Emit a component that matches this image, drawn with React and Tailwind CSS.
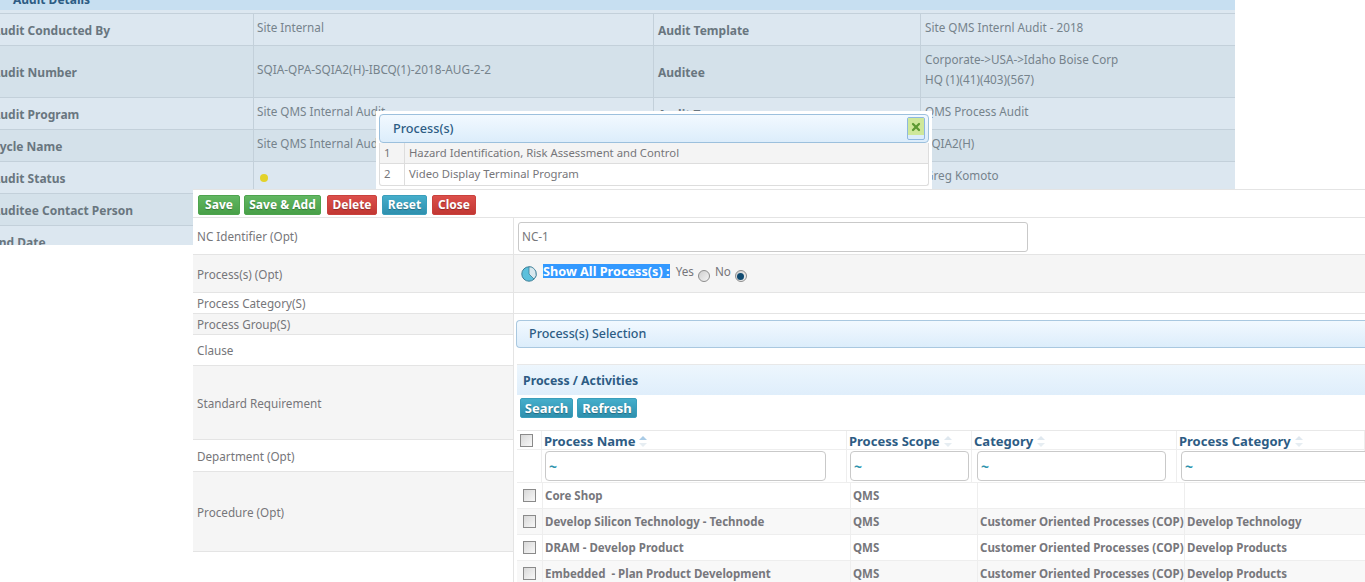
import React from 'react';
import { X } from 'lucide-react';

const font = "font-['Tahoma','Noto_Sans','DejaVu_Sans',sans-serif]";

const auditRows = [
  { h: 'h-8', bg: 'bg-[#dce7f0]', a: 'Audit Conducted By', b: 'Site Internal', c: 'Audit Template', d: 'Site QMS Internl Audit - 2018' },
  { h: 'h-[52px]', bg: 'bg-[#d4e1ea]', a: 'Audit Number', b: 'SQIA-QPA-SQIA2(H)-IBCQ(1)-2018-AUG-2-2', tall: true, c: 'Auditee', d: 'Corporate->USA->Idaho Boise Corp', d2: 'HQ (1)(41)(403)(567)' },
  { h: 'h-8', bg: 'bg-[#dce7f0]', a: 'Audit Program', b: 'Site QMS Internal Audit', c: 'Audit Type', d: 'QMS Process Audit' },
  { h: 'h-8', bg: 'bg-[#d4e1ea]', a: 'Cycle Name', b: 'Site QMS Internal Audit', c: 'Cycle', d: 'SQIA2(H)' },
  { h: 'h-8', bg: 'bg-[#dce7f0]', a: 'Audit Status', dot: true, c: 'Lead Auditor', d: 'Greg Komoto' },
  { h: 'h-8', bg: 'bg-[#d4e1ea]', a: 'Auditee Contact Person', b: '', c: '', d: '' },
  { h: 'h-8', bg: 'bg-[#dce7f0]', a: 'End Date', b: '', c: '', d: '' },
];

const formRows = [
  { h: 'h-[37px]', label: 'NC Identifier (Opt)' },
  { h: 'h-[38px]', label: 'Process(s) (Opt)', gray: true },
  { h: 'h-[21px]', label: 'Process Category(S)' },
  { h: 'h-[21px]', label: 'Process Group(S)', gray: true },
  { h: 'h-[31px]', label: 'Clause' },
  { h: 'h-[74px]', label: 'Standard Requirement', gray: true },
  { h: 'h-[32px]', label: 'Department (Opt)' },
  { h: 'h-[80px]', label: 'Procedure (Opt)', gray: true },
];

const processes = [
  { name: 'Core Shop', scope: 'QMS', category: '', group: '' },
  { name: 'Develop Silicon Technology - Technode', scope: 'QMS', category: 'Customer Oriented Processes (COP)', group: 'Develop Technology' },
  { name: 'DRAM - Develop Product', scope: 'QMS', category: 'Customer Oriented Processes (COP)', group: 'Develop Products' },
  { name: 'Embedded  - Plan Product Development', scope: 'QMS', category: 'Customer Oriented Processes (COP)', group: 'Develop Products' },
];

const headCols = [
  { w: 'w-[305px] shrink-0', label: 'Process Name', active: true, pad: 'pl-[3px]', filter: 'w-[281px]' },
  { w: 'w-[125px] shrink-0', label: 'Process Scope', pad: 'pl-[3px]', filter: 'w-[119px]' },
  { w: 'w-[205px] shrink-0', label: 'Category', pad: 'pl-[5px]', filter: 'w-[189px]' },
  { w: 'flex-1 min-w-0', label: 'Process Category', pad: 'pl-[4px]', filter: 'w-[200px]' },
];

const Btn = ({ color, w, size = 'text-[12px]', children }) => (
  <button className={`${w} h-[20px] shrink-0 rounded-[2px] border ${size} leading-none font-bold text-white [text-shadow:0_1px_1px_rgba(0,0,0,0.3)] bg-gradient-to-b ${color}`}>
    {children}
  </button>
);

const green = 'from-[#62b762] to-[#48a048] border-[#4ea44e]';
const red = 'from-[#dc4f4b] to-[#c23733] border-[#c9413d]';
const blue = 'from-[#45aecb] to-[#2f90ae] border-[#3a9ebb]';

const Check = () => (
  <span className="block w-[13px] h-[13px] border border-[#8a8a8a] bg-gradient-to-br from-[#d8d8d8] to-[#f8f8f8]" />
);

const Radio = ({ on }) => (
  <span className="inline-flex items-center justify-center w-3 h-3 rounded-full border border-[#8d8d8d] bg-gradient-to-br from-[#cfcfcf] to-[#f4f4f4] mt-[7px]">
    {on && <span className="w-[7px] h-[7px] rounded-full bg-[#0f4a70]" />}
  </span>
);

const SortIcon = ({ active }) => (
  <svg width="8" height="11" viewBox="0 0 8 11" className="ml-1">
    <path d="M4 0 L8 4 H0 Z" fill={active ? '#a9cbe6' : '#dfe8ef'} />
    <path d="M4 11 L8 7 H0 Z" fill="#e6edf2" />
  </svg>
);

const PieIcon = () => (
  <svg width="16" height="16" viewBox="0 0 16 16" className="mt-[4px]">
    <circle cx="8" cy="8" r="7.2" fill="#5cc0dc" stroke="#3d7f98" />
    <path d="M8 8 V0.8 A7.2 7.2 0 0 1 13.1 13.1 Z" fill="#d8e8ee" stroke="#3d7f98" strokeWidth="0.8" />
  </svg>
);

const AuditPanel = () => (
  <div className="w-[1235px] h-[245px] overflow-hidden text-[11.7px]">
    <div className="h-[10px] bg-[#c7dff1] overflow-hidden pl-[13px]">
      <div className="-mt-[9px] text-[12px] font-bold text-[#2d5c84]">Audit Details</div>
    </div>
    <div className="h-[3px] bg-[#dce7f0]" />
    {auditRows.map((r) => (
      <div key={r.a} className={`flex ${r.h} ${r.bg} border-t border-[#c3d0da] text-[#76838c]`}>
        <div className="w-[262px] shrink-0 -ml-[8px] flex items-center text-[12px] font-bold text-[#69767f] border-r border-[#c3d0da]">
          <span className="pt-[2px]">{r.a}</span>
        </div>
        <div className={`w-[400px] shrink-0 pl-[3px] border-r border-[#c3d0da] ${r.tall ? 'pt-[15px] text-[11.8px]' : 'pt-[5px]'}`}>
          {r.dot ? <span className="block w-2 h-2 rounded-full bg-[#e3d22a] ml-[3px] mt-[7px]" /> : r.b}
        </div>
        <div className="w-[267px] shrink-0 pl-[4px] flex items-center text-[12px] font-bold text-[#69767f] border-r border-[#c3d0da]">
          <span className="pt-[2px]">{r.c}</span>
        </div>
        <div className="flex-1 pl-[4px] pt-[5px] leading-[20px]">
          <div className="-mt-[2px]">{r.d}</div>
          {r.d2 && <div>{r.d2}</div>}
        </div>
      </div>
    ))}
  </div>
);

const ProcessPopup = () => (
  <div className="absolute left-[376px] top-[111px] w-[556px] h-[78px] bg-white p-[3px] pb-0 text-[11.3px]">
    <div className="relative h-[29px] flex items-center pl-[13px] rounded-[4px] border border-[#9cc0dd] bg-gradient-to-b from-[#f2f9ff] to-[#dcedfb] text-[12.7px] font-medium text-[#2d5c84]">
      Process(s)
      <span className="absolute right-[3px] top-[2px] w-[18px] h-[23px] rounded-[2px] border border-[#8fb8e0] flex items-start justify-center bg-[#dcedfb]">
        <span className="w-full h-[17px] flex items-center justify-center bg-[#cfe89a]">
          <X size={12} strokeWidth={4.5} className="text-[#5d9a33]" />
        </span>
      </span>
    </div>
    <div className="border border-t-0 border-[#dddddd] rounded-b-[3px] text-[#76767a]">
      <div className="flex h-[21px] items-center bg-[#f4f4f4] border-b border-[#dddddd]">
        <span className="w-[25px] pl-[4px] h-full flex items-center border-r border-[#dddddd]">1</span>
        <span className="pl-1">Hazard Identification, Risk Assessment and Control</span>
      </div>
      <div className="flex h-[21px] items-center">
        <span className="w-[25px] pl-[4px] h-full flex items-center border-r border-[#dddddd]">2</span>
        <span className="pl-1">Video Display Terminal Program</span>
      </div>
    </div>
  </div>
);

const ProcessTable = () => (
  <div className="ml-[3px] mt-[16px] border-t border-[#e8e8e8]">
    <div className="h-[30px] flex items-center pl-[6px] pt-[2px] bg-gradient-to-b from-[#edf6fd] to-[#dfeefb] text-[12.3px] font-bold text-[#2d5c84]">
      Process / Activities
    </div>
    <div className="h-[35px] flex items-start gap-[4px] pl-[3px] pt-[3px]">
      <Btn color={blue} w="w-[53px]" size="text-[13px]">Search</Btn>
      <Btn color={blue} w="w-[60px]" size="text-[13px]">Refresh</Btn>
    </div>
    <div className="flex h-[19px] border-t border-[#e8e8e8] text-[13px] font-bold text-[#2d5c84]">
      <div className="w-[25px] shrink-0 flex items-center pl-[3px] pt-[1px] border-r border-[#eeeeee]"><Check /></div>
      {headCols.map((c) => (
        <div key={c.label} className={`${c.w} pl-[2px] pt-[3px] flex items-center border-r border-[#eeeeee]`}>
          {c.label}
          <SortIcon active={c.active} />
        </div>
      ))}
    </div>
    <div className="flex h-[34px] border-t border-b border-[#eeeeee]">
      <div className="w-[25px] shrink-0 border-r border-[#eeeeee]" />
      {headCols.map((c) => (
        <div key={c.label} className={`${c.w} ${c.pad} pt-[1px] border-r border-[#eeeeee]`}>
          <div className={`${c.filter} h-[30px] flex items-center pl-[3px] rounded-[4px] border border-[#c9c9c9] bg-white text-[14px] text-[#2f93ad] font-bold`}>~</div>
        </div>
      ))}
    </div>
    {processes.map((p, i) => (
      <div key={p.name} className={`flex h-[26px] items-center border-b border-[#eeeeee] font-bold text-[11.5px] text-[#77777c] whitespace-pre ${i % 2 ? 'bg-[#f8f8f8]' : 'bg-white'}`}>
        <div className="w-[26px] h-full shrink-0 flex items-center pl-[6px] border-r border-[#eeeeee]"><Check /></div>
        <div className="w-[308px] h-full flex items-center pl-[2px] border-r border-[#eeeeee]">{p.name}</div>
        <div className="w-[127px] h-full flex items-center pl-[2px] border-r border-[#eeeeee]">{p.scope}</div>
        <div className="w-[207px] h-full flex items-center pl-[2px] border-r border-[#eeeeee]">{p.category}</div>
        <div className="flex-1 h-full flex items-center pl-[2px]">{p.group}</div>
      </div>
    ))}
  </div>
);

const FormPanel = () => (
  <div className="absolute left-[193px] top-[189px] right-0 bottom-0 overflow-hidden bg-white border-t border-[#e4e4e4] text-[11.7px] text-[#76767a]">
    <div className="h-[28px] flex items-start pl-[5px] pt-[5px] border-b border-[#e4e4e4]">
      <Btn color={green} w="w-[42px]">Save</Btn>
      <Btn color={green} w="w-[77px] ml-[4px]">Save &amp; Add</Btn>
      <Btn color={red} w="w-[50px] ml-[6px]">Delete</Btn>
      <Btn color={blue} w="w-[45px] ml-[5px]">Reset</Btn>
      <Btn color={red} w="w-[44px] ml-[5px]">Close</Btn>
    </div>
    <div className="flex">
      <div className="w-[321px] shrink-0 border-r border-[#e4e4e4]">
        {formRows.map((r) => (
          <div key={r.label} className={`${r.h} flex items-center pl-[4px] pt-[2px] border-b border-[#e4e4e4] ${r.gray ? 'bg-[#f5f5f5]' : 'bg-white'}`}>
            {r.label}
          </div>
        ))}
      </div>
      <div className="flex-1 min-w-0">
        <div className="h-[37px] flex items-center pl-[4px] pt-[2px] border-b border-[#e4e4e4]">
          <div className="w-[510px] h-[30px] flex items-center pl-[3px] rounded-[3px] border border-[#c9c9c9]">NC-1</div>
        </div>
        <div className="h-[38px] flex items-start pl-[7px] pt-[7px] bg-[#f5f5f5] border-b border-[#e4e4e4]">
          <PieIcon />
          <span className="ml-[6px] mt-[2px] h-[14px] leading-[14px] text-[12.7px] font-bold text-white bg-[#3399ff]">Show All Process(s) :</span>
          <span className="flex items-start gap-[4px] ml-[6px] mt-[1px] leading-[16px]">Yes <Radio /></span>
          <span className="flex items-start gap-[4px] ml-[5px] mt-[1px] leading-[16px]">No <Radio on /></span>
        </div>
        <div className="h-[21px] border-b border-[#e4e4e4]" />
        <div className="mt-[6px] ml-[2px] h-[28px] flex items-center pl-[12px] rounded-l-[4px] border border-r-0 border-[#a9c8e0] bg-gradient-to-b from-[#f2f9ff] to-[#dcedfb] text-[12.5px] font-medium text-[#2d5c84]">
          Process(s) Selection
        </div>
        <ProcessTable />
      </div>
    </div>
  </div>
);

export default function App() {
  return (
    <div className={`relative w-[1365px] h-[582px] overflow-hidden bg-white ${font}`}>
      <AuditPanel />
      <ProcessPopup />
      <FormPanel />
    </div>
  );
}
